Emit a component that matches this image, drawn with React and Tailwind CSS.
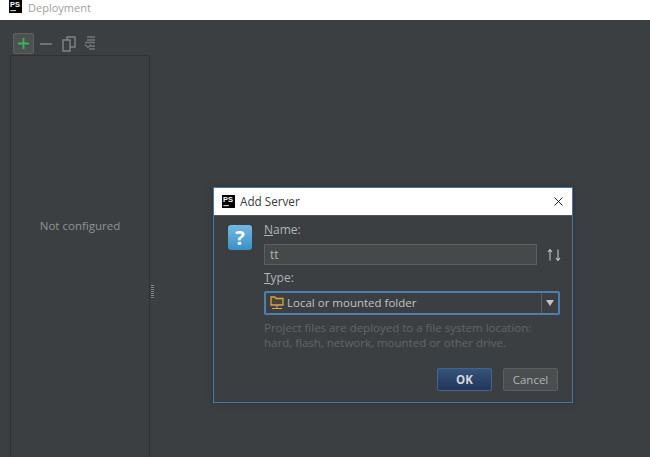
import { X } from 'lucide-react';

const PsLogo = ({ className }) => (
  <svg className={className} viewBox="0 0 14 14">
    <rect width="14" height="14" fill="#000" />
    <text x="1.2" y="8" fontSize="8" fontWeight="700" fill="#fff" fontFamily="Liberation Sans, sans-serif">PS</text>
    <rect x="1.5" y="11" width="6" height="1" fill="#fff" />
  </svg>
);

const Toolbar = () => (
  <div className="flex items-start h-[35px] pt-[13px] pl-[13px]">
    <div className="w-[21px] h-[21px] rounded-[2px] border border-[#5d6162] bg-[#4d5152] flex items-center justify-center">
      <svg className="w-[11px] h-[11px]" viewBox="0 0 11 11">
        <path d="M5.5 0v11M0 5.5h11" stroke="#3cb35a" strokeWidth="1.8" />
      </svg>
    </div>
    <svg className="w-[12px] h-[12px] ml-[6px] mt-[5px]" viewBox="0 0 12 12">
      <path d="M0 6h12" stroke="#7b7f80" strokeWidth="1.6" />
    </svg>
    <svg className="w-[14px] h-[16px] ml-[10px] mt-[3px]" viewBox="0 0 14 16" fill="none" stroke="#808485" strokeWidth="1.4">
      <path d="M1 4h7v11H1z" />
      <path d="M5 4V1h8v10H8" />
    </svg>
    <svg className="w-[12px] h-[15px] ml-[8px] mt-[3px]" viewBox="0 0 12 15" fill="none" stroke="#737778" strokeWidth="1.3">
      <path d="M3 1h8M3 4h8M1 6.5h10M1 8.5l3 3 3-3M6 10h5M5 13h6" />
    </svg>
  </div>
);

const DialogFields = () => (
  <div className="flex-1 min-w-0">
    <div className="text-[12px] leading-[16px] text-[#b0b4b5] mt-[6px]">
      <span className="underline">N</span>ame:
    </div>
    <div className="flex items-center mt-[6px]">
      <div className="w-[273px] h-[21px] bg-[#45494a] border border-[#5b5f60] pl-[5px] flex items-center text-[12px] text-[#b0b4b5]">
        tt
      </div>
      <svg className="w-[14px] h-[12px] ml-[10px]" viewBox="0 0 14 12" fill="none" stroke="#c0c2c4" strokeWidth="1.1">
        <path d="M3 11.5V1M1 3l2-2.5L5 3M11 .5V11M9 9l2 2.5L13 9" />
      </svg>
    </div>
    <div className="text-[12px] leading-[16px] text-[#b0b4b5] mt-[5px]">
      <span className="underline">T</span>ype:
    </div>
    <div className="w-[296px] h-[24px] mt-[5px] bg-[#3c3f41] border-2 border-[#4f7fb0] rounded-[2px] flex items-center">
      <svg className="w-[14px] h-[14px] ml-[4px] shrink-0" viewBox="0 0 14 14" fill="none">
        <path d="M1 1h4l1 1.5h7V9H1z" fill="#4a4434" stroke="#d6a64e" strokeWidth="1.3" />
        <path d="M7 9v3M2 12.5h10" stroke="#d6a64e" strokeWidth="1" />
      </svg>
      <span className="ml-[3px] flex-1 text-[11.5px] text-[#c0c3c4]">Local or mounted folder</span>
      <div className="w-[17px] h-full border-l border-[#5b5f60] flex items-center justify-center">
        <div className="w-0 h-0 border-x-[4px] border-x-transparent border-t-[6px] border-t-[#c2c4c5]" />
      </div>
    </div>
    <p className="text-[11.5px] leading-[15px] text-[#626667] mt-[5px]">
      Project files are deployed to a file system location:
      <br />
      hard, flash, network, mounted or other drive.
    </p>
    <div className="flex justify-end gap-[11px] mt-[18px] pr-[14px]">
      <button className="w-[55px] h-[23px] rounded-[2px] border border-[#46648a] bg-gradient-to-b from-[#34537c] to-[#22365a] text-[11.5px] font-bold text-[#d4d8da]">
        OK
      </button>
      <button className="w-[55px] h-[23px] rounded-[2px] border border-[#5b5f60] bg-[#4a4e4f] text-[11.5px] text-[#b0b4b5]">
        Cancel
      </button>
    </div>
  </div>
);

export default function App() {
  return (
    <div className="relative w-[650px] h-[457px] overflow-hidden bg-[#3c3f41] font-['Open_Sans',sans-serif]">
      <div className="h-[20px] bg-white flex items-start pl-[9px]">
        <PsLogo className="w-[13px] h-[13px]" />
        <span className="ml-[6px] text-[11px] leading-[15px] text-[#a0a0a0]">Deployment</span>
      </div>
      <Toolbar />
      <div className="ml-[10px] w-[140px] h-[402px] border-x border-t border-[#323232] flex items-center justify-center">
        <span className="text-[11.5px] text-[#8f9394] -mt-[61px]">Not configured</span>
      </div>

      {/* splitter grip */}
      <div className="absolute left-[151px] top-[285px] w-[3px] h-[14px] bg-[repeating-linear-gradient(to_bottom,#8a8e8f_0,#8a8e8f_1px,#2f3132_1px,#2f3132_2px)]" />

      {/* modal dialog */}
      <div className="absolute left-[213px] top-[187px] w-[360px] h-[216px] bg-[#3c3f41] border border-[#3f79a8] shadow-[0_0_6px_#2f3132]">
        <div className="h-[28px] bg-white border-b border-[#555] flex items-center pl-[8px]">
          <PsLogo className="w-[13px] h-[13px]" />
          <span className="ml-[5px] text-[11.7px] text-[#3a3a3a]">Add Server</span>
          <X className="w-[15px] h-[15px] ml-auto mr-[6px] text-[#222]" strokeWidth={1.6} />
        </div>
        <div className="flex pl-[14px]">
          <div className="w-[24px] h-[25px] mt-[9px] mr-[12px] shrink-0 rounded-[3px] bg-gradient-to-b from-[#74b9e4] to-[#3b8fc7] flex items-center justify-center text-[20px] font-bold text-white leading-none">
            ?
          </div>
          <DialogFields />
        </div>
      </div>
    </div>
  );
}
